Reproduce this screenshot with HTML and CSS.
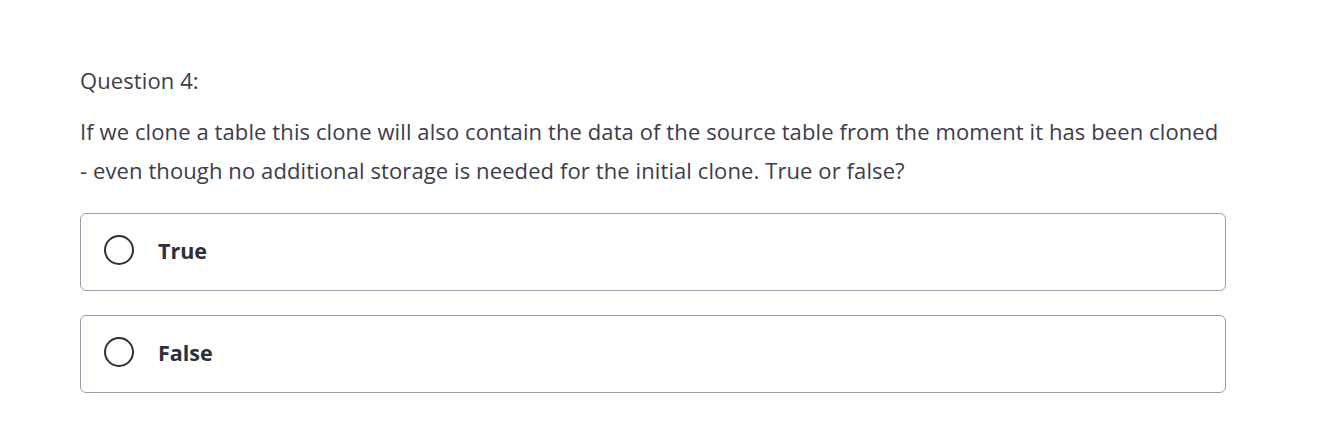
FILE: index.html
```html
<!DOCTYPE html>
<html>
<head>
<meta charset="utf-8">
<link rel="stylesheet" href="styles.css">
</head>
<body>
<div class="quiz">
  <div class="q-title">Question 4:</div>
  <div class="q-text">If we clone a table this clone will also contain the data of the source table from the moment it has been cloned - even though no additional storage is needed for the initial clone. True or false?</div>
  <ul class="answers">
    <li class="answer"><span class="radio"></span><span class="label">True</span></li>
    <li class="answer"><span class="radio"></span><span class="label">False</span></li>
  </ul>
</div>
</body>
</html>
```
FILE: styles.css
```css
html, body {
  margin: 0;
  padding: 0;
  background: #fff;
}
body {
  font-family: "Open Sans", "Liberation Sans", sans-serif;
  color: #3e4143;
}
.quiz {
  width: 1146px;
  padding: 64px 0 0 80px;
}
.q-title {
  font-size: 22px;
  line-height: 32px;
  font-weight: 400;
  letter-spacing: 0.1px;
  color: #3d3c4a;
}
.q-text {
  margin-top: 16px;
  font-size: 22px;
  line-height: 39px;
  font-weight: 400;
  letter-spacing: 0.1px;
  color: #3d3c4a;
  padding-right: 4px;
}
.answers {
  list-style: none;
  margin: 23px 0 0;
  padding: 0;
  display: flex;
  flex-direction: column;
  gap: 24px;
}
.answer {
  height: 72px;
  padding: 0 0 4px 23px;
  border: 1px solid #9d9cae;
  border-radius: 6px;
  display: flex;
  align-items: center;
}
.radio {
  width: 26px;
  height: 26px;
  border: 2.5px solid #2d2f3d;
  border-radius: 50%;
  flex: none;
}
.label {
  margin-left: 24px;
  font-size: 21.5px;
  font-weight: 700;
  color: #2d2f3d;
}
```
